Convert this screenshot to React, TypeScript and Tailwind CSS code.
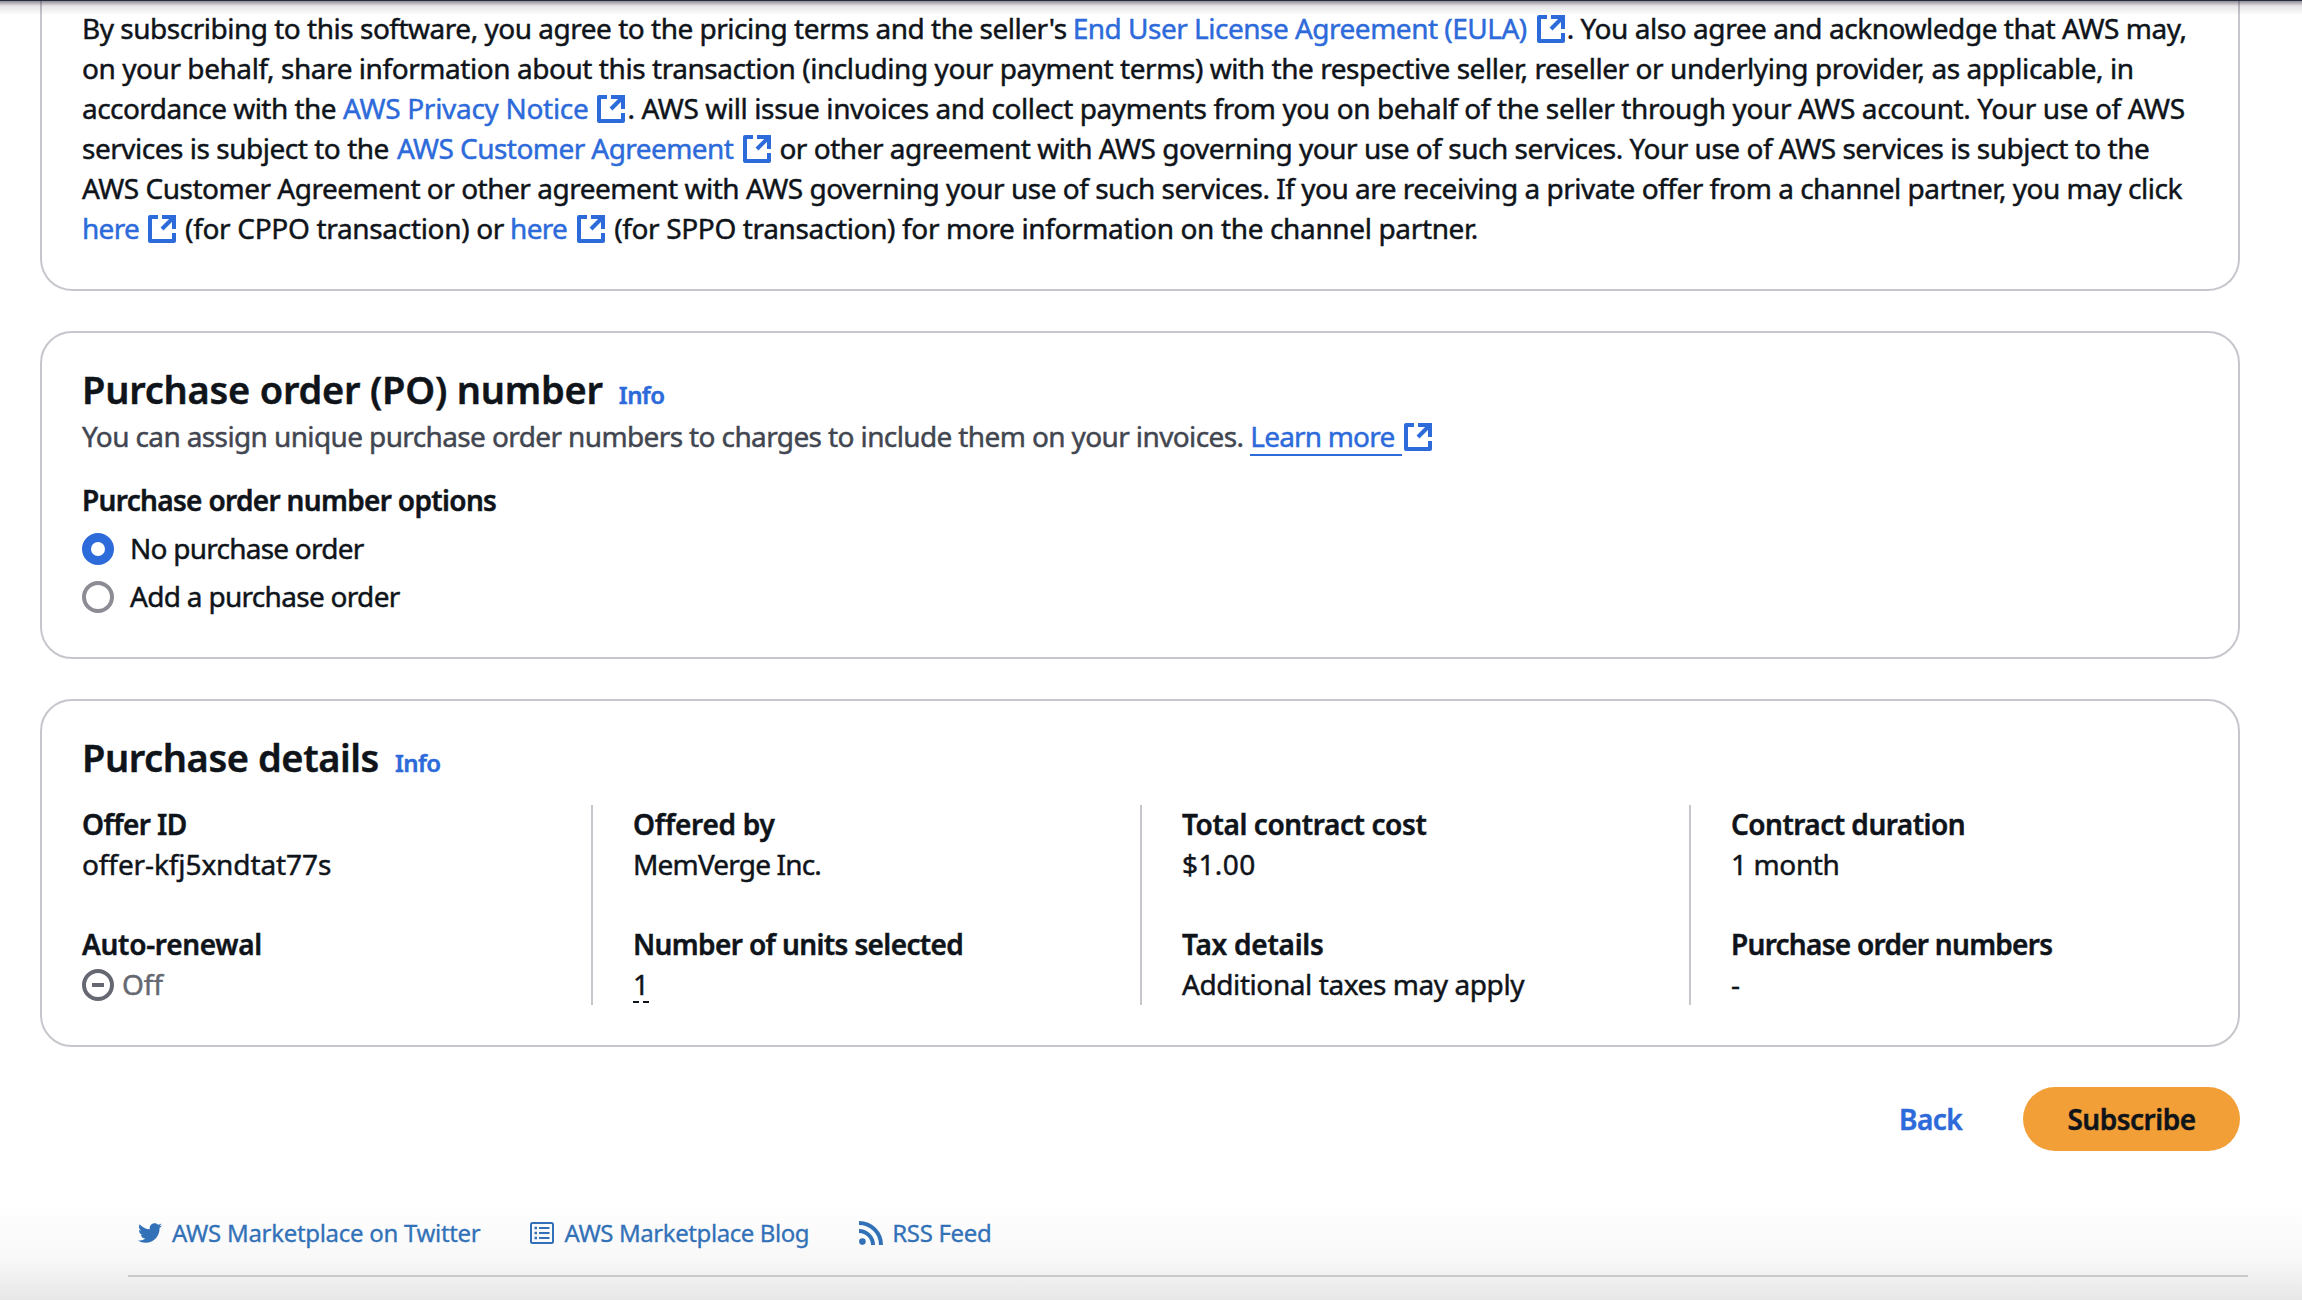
import type { ReactNode } from "react";
import { FaTwitter } from "react-icons/fa";

function ExternalIcon({ className = "ml-[10px]" }: { className?: string }) {
  return (
    <svg viewBox="1 1 14 14" className={`mt-[2px] h-7 w-7 shrink-0 text-[#2d6ada] ${className}`} fill="none" stroke="currentColor" strokeWidth="2">
      <path d="M6 2H2V14H14V10" strokeLinejoin="round" />
      <path d="M8 2H14V8" />
      <path d="M8 8L14 2" />
    </svg>
  );
}

function ListIcon() {
  return (
    <svg viewBox="0 0 24 22" className="h-[22px] w-6" fill="none" stroke="currentColor" strokeWidth="2">
      <rect x="1" y="1" width="22" height="20" rx="1.5" />
      <path d="M4.5 6H7M4.5 11H7M4.5 16H7" strokeWidth="2.6" />
      <path d="M9 6H19.5M9 11H19.5M9 16H19.5" />
    </svg>
  );
}

function RssIcon() {
  return (
    <svg viewBox="0 0 24 24" className="h-6 w-6" fill="none" stroke="currentColor" strokeWidth="4">
      <circle cx="3.4" cy="20.6" r="3.3" fill="currentColor" stroke="none" />
      <path d="M0 10A14 14 0 0 1 14 24" />
      <path d="M0 2A22 22 0 0 1 22 24" />
    </svg>
  );
}

function Line({ children }: { children: ReactNode }) {
  return <div className="flex h-10 items-center">{children}</div>;
}

function Link({ children, className }: { children: ReactNode; className: string }) {
  return <a className={`text-[#2d6ada] ${className}`}>{children}</a>;
}

function Info() {
  return <a className="ml-[16px] text-[24px] leading-8 font-semibold tracking-[-0.6px] text-[#2d6ada]">Info</a>;
}

function Field({ label, labelClass, children }: { label: string; labelClass: string; children: ReactNode }) {
  return (
    <div>
      <div className={`h-10 font-semibold ${labelClass}`}>{label}</div>
      <div className="flex h-10 items-center">{children}</div>
    </div>
  );
}

function Column({ first, className, children }: { first?: boolean; className: string; children: ReactNode }) {
  return (
    <div className={`h-[200px] ${first ? "" : "border-l-2 border-[#c6c6cd] pl-10"} ${className}`}>
      <div className="-mt-px flex flex-col gap-10">{children}</div>
    </div>
  );
}

export default function App() {
  return (
    <div className="relative h-[1300px] w-[2302px] overflow-hidden bg-white font-['Noto_Sans',sans-serif] text-[28px] leading-10 whitespace-nowrap text-[#0f141a] [-webkit-text-stroke-width:0.45px]">
      <div className="absolute inset-x-0 top-0 z-10">
        <div className="h-px bg-[#232f3e]" />
        <div className="h-[14px] bg-linear-to-b from-[#231a2d]/50 via-[#231a2d]/12 via-35% to-transparent" />
      </div>

      <main className="ml-10 flex w-[2200px] flex-col gap-10">
        <section className="h-[291px] rounded-b-[32px] border-2 border-t-0 border-[#c6c6cd] px-10 pt-2">
          <Line>
            <span className="tracking-[-0.49px]">By subscribing to this software, you agree to the pricing terms and the seller's</span>
            <Link className="ml-[6px] tracking-[-0.5px]">End User License Agreement (EULA)</Link>
            <ExternalIcon />
            <span className="ml-[2px] tracking-[-0.45px]">. You also agree and acknowledge that AWS may,</span>
          </Line>
          <Line>
            <span className="tracking-[-0.44px]">on your behalf, share information about this transaction (including your payment terms) with the respective seller, reseller or underlying provider, as applicable, in</span>
          </Line>
          <Line>
            <span className="tracking-[-0.55px]">accordance with the</span>
            <Link className="ml-[7px] tracking-[-0.3px]">AWS Privacy Notice</Link>
            <ExternalIcon className="ml-[9px]" />
            <span className="ml-[2px] tracking-[-0.4px]">. AWS will issue invoices and collect payments from you on behalf of the seller through your AWS account. Your use of AWS</span>
          </Line>
          <Line>
            <span className="tracking-[-0.48px]">services is subject to the</span>
            <Link className="ml-[8px] tracking-[-0.56px]">AWS Customer Agreement</Link>
            <ExternalIcon />
            <span className="ml-[8px] tracking-[-0.48px]">or other agreement with AWS governing your use of such services. Your use of AWS services is subject to the</span>
          </Line>
          <Line>
            <span className="tracking-[-0.49px]">AWS Customer Agreement or other agreement with AWS governing your use of such services. If you are receiving a private offer from a channel partner, you may click</span>
          </Line>
          <Line>
            <Link className="tracking-[-0.7px]">here</Link>
            <ExternalIcon className="ml-[9px]" />
            <span className="ml-[9px] tracking-[-0.32px]">(for CPPO transaction) or</span>
            <Link className="ml-[6px] tracking-[-0.7px]">here</Link>
            <ExternalIcon />
            <span className="ml-[9px] tracking-[-0.36px]">(for SPPO transaction) for more information on the channel partner.</span>
          </Line>
        </section>

        <section className="h-[328px] rounded-[32px] border-2 border-[#c6c6cd] px-10 pt-8">
          <div className="flex h-12 items-baseline">
            <h2 className="text-[38px] leading-[48px] font-semibold tracking-[-0.22px]">Purchase order (PO) number</h2>
            <Info />
          </div>
          <div className="mt-[3px] flex h-10 items-center text-[#424650]">
            <span className="tracking-[-0.62px]">You can assign unique purchase order numbers to charges to include them on your invoices.</span>
            <span className="ml-[7px] h-10 w-[152px] border-b-2 border-[#2d6ada] tracking-[-0.82px] text-[#2d6ada]">Learn more</span>
            <ExternalIcon className="ml-[2px]" />
          </div>
          <div className="mt-6 h-10 font-semibold tracking-[-0.67px]">Purchase order number options</div>
          <label className="mt-2 flex h-10 items-center">
            <span className="mt-[2px] h-8 w-8 rounded-full border-[9px] border-[#2d6ada] bg-white" />
            <span className="ml-4 tracking-[-0.76px]">No purchase order</span>
          </label>
          <label className="mt-2 flex h-10 items-center">
            <span className="mt-[2px] h-8 w-8 rounded-full border-4 border-[#8c8c94]" />
            <span className="ml-4 tracking-[-0.7px]">Add a purchase order</span>
          </label>
        </section>

        <section className="h-[348px] rounded-[32px] border-2 border-[#c6c6cd] px-10 pt-8">
          <div className="flex h-12 items-baseline">
            <h2 className="text-[38px] leading-[48px] font-semibold tracking-[-0.42px]">Purchase details</h2>
            <Info />
          </div>
          <div className="mt-6 flex">
            <Column first className="w-[509px]">
              <Field label="Offer ID" labelClass="tracking-[-0.6px]">
                <span className="tracking-[-0.1px]">offer-kfj5xndtat77s</span>
              </Field>
              <Field label="Auto-renewal" labelClass="tracking-[-0.29px]">
                <svg viewBox="0 0 32 32" className="mt-[2px] h-8 w-8 text-[#656871]" fill="none" stroke="currentColor" strokeWidth="4">
                  <circle cx="16" cy="16" r="14" />
                  <path d="M10 16H22" />
                </svg>
                <span className="ml-2 text-[#656871]">Off</span>
              </Field>
            </Column>
            <Column className="w-[549px]">
              <Field label="Offered by" labelClass="tracking-[-0.27px]">
                <span className="tracking-[-0.82px]">MemVerge Inc.</span>
              </Field>
              <Field label="Number of units selected" labelClass="tracking-[-0.62px]">
                <span className="relative">
                  1
                  <span className="absolute bottom-px left-0 flex gap-1">
                    <i className="h-[2px] w-[6px] bg-[#0f141a]" />
                    <i className="h-[2px] w-[6px] bg-[#0f141a]" />
                  </span>
                </span>
              </Field>
            </Column>
            <Column className="w-[549px]">
              <Field label="Total contract cost" labelClass="tracking-[-0.4px]">
                <span className="tracking-[0.4px]">$1.00</span>
              </Field>
              <Field label="Tax details" labelClass="tracking-[-0.25px]">
                <span className="tracking-[-0.42px]">Additional taxes may apply</span>
              </Field>
            </Column>
            <Column className="flex-1">
              <Field label="Contract duration" labelClass="tracking-[-0.52px]">
                <span className="tracking-[-0.38px]">1 month</span>
              </Field>
              <Field label="Purchase order numbers" labelClass="tracking-[-0.72px]">-</Field>
            </Column>
          </div>
        </section>

        <div className="flex h-16 items-center justify-end font-semibold">
          <button className="mr-[61px] tracking-[-0.6px] text-[#2d6ada]">Back</button>
          <button className="h-16 w-[217px] rounded-full bg-[#f29f38] tracking-[-0.5px]">Subscribe</button>
        </div>
      </main>

      <footer className="mt-[49px] h-[100px] bg-linear-to-b from-white via-[#f8f8f8] via-60% to-[#e7e7e7] pt-[17px]">
        <nav className="ml-[138px] flex h-8 items-center text-[24px] leading-8 text-[#3271b7] [-webkit-text-stroke-width:0.3px]">
          <a className="flex items-center tracking-[-0.3px]">
            <FaTwitter className="mr-[10px] h-6 w-6" />
            AWS Marketplace on Twitter
          </a>
          <a className="ml-[50px] flex items-center tracking-[-0.42px]">
            <span className="mr-[10px]"><ListIcon /></span>
            AWS Marketplace Blog
          </a>
          <a className="ml-[50px] flex items-center tracking-[-0.3px]">
            <span className="mr-[9px]"><RssIcon /></span>
            RSS Feed
          </a>
        </nav>
        <div className="mt-[26px] ml-32 h-[2px] w-[2120px] bg-[#c9caca]" />
      </footer>
    </div>
  );
}
